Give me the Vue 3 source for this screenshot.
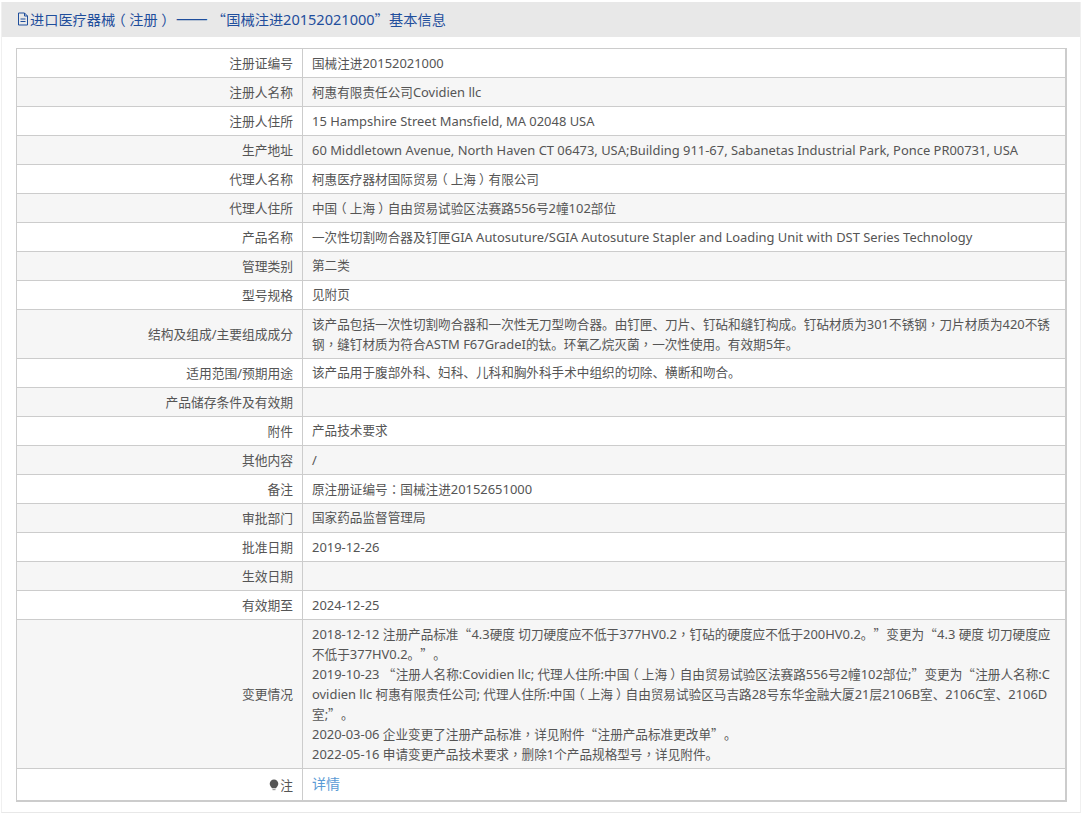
<template>
  <div class="page">
    <div class="panel">
      <div class="panel-head">
        <svg class="doc-icon" viewBox="0 0 12 14" width="12" height="14">
          <path d="M1.5 1h6l3 3v9h-9z M7.5 1v3h3 M3.5 7h5 M3.500 9.500h5" fill="none" stroke="currentColor" stroke-width="1" />
        </svg>
        <span class="head-text"><span v-for="(seg, n) in split(title)" :key="n" :class="seg.cls">{{ seg.text }}</span></span>
      </div>
      <div class="panel-body">
        <table class="info-table">
          <colgroup>
            <col class="col-label" />
            <col />
          </colgroup>
          <tbody>
            <tr v-for="(row, i) in rows" :key="i" :class="{ odd: i % 2 === 1 }">
              <td class="label">{{ row.label }}</td>
              <td class="value">
                <div v-for="(line, j) in row.lines" :key="j" class="line">
                  <span v-for="(seg, n) in split(line)" :key="n" :class="seg.cls">{{ seg.text }}</span>
                </div>
              </td>
            </tr>
            <tr class="last">
              <td class="label">
                <svg class="bulb" viewBox="0 0 10 12" width="10" height="12">
                  <path d="M5 .5a4.300 4.300 0 0 1 4.300 4.300c0 1.900-1.500 3-2.300 4.400H3C2.200 7.800.7 6.700.7 4.800A4.300 4.300 0 0 1 5 .5z" fill="#555" />
                  <rect x="3.500" y="10" width="3" height="1.200" fill="#999" />
                </svg>注
              </td>
              <td class="value"><a class="link" href="#">详情</a></td>
            </tr>
          </tbody>
        </table>
      </div>
    </div>
  </div>
</template>

<script setup>
const title = '进口医疗器械（注册） ——“国械注进20152021000”基本信息'

// 西文、引号、破折号、括号、居中标点分开设置字体
function split(text) {
  return text.split(/([\x20-\x7e]+|[“”]+|—+|[，：]+|[（）])/).filter(Boolean).map((part) => {
    let cls = ''
    if (/^[\x20-\x7e]+$/.test(part)) cls = 'latin'
    else if (/^[“”]+$/.test(part)) cls = 'wide'
    else if (/^—+$/.test(part)) cls = 'dash'
    else if (/^[，：]+$/.test(part)) cls = 'mid'
    else if (/^[（）]$/.test(part)) cls = 'paren'
    return { text: part, cls }
  })
}

// 表格内容
const rows = [
  { label: '注册证编号', lines: ['国械注进20152021000'] },
  { label: '注册人名称', lines: ['柯惠有限责任公司Covidien llc'] },
  { label: '注册人住所', lines: ['15 Hampshire Street Mansfield, MA 02048 USA'] },
  { label: '生产地址', lines: ['60 Middletown Avenue, North Haven CT 06473, USA;Building 911-67, Sabanetas Industrial Park, Ponce PR00731, USA'] },
  { label: '代理人名称', lines: ['柯惠医疗器材国际贸易（上海）有限公司'] },
  { label: '代理人住所', lines: ['中国（上海）自由贸易试验区法赛路556号2幢102部位'] },
  { label: '产品名称', lines: ['一次性切割吻合器及钉匣GIA Autosuture/SGIA Autosuture Stapler and Loading Unit with DST Series Technology'] },
  { label: '管理类别', lines: ['第二类'] },
  { label: '型号规格', lines: ['见附页'] },
  {
    label: '结构及组成/主要组成成分',
    lines: [
      '该产品包括一次性切割吻合器和一次性无刀型吻合器。由钉匣、刀片、钉砧和缝钉构成。钉砧材质为301不锈钢，刀片材质为420不锈',
      '钢，缝钉材质为符合ASTM F67GradeI的钛。环氧乙烷灭菌，一次性使用。有效期5年。'
    ]
  },
  { label: '适用范围/预期用途', lines: ['该产品用于腹部外科、妇科、儿科和胸外科手术中组织的切除、横断和吻合。'] },
  { label: '产品储存条件及有效期', lines: [''] },
  { label: '附件', lines: ['产品技术要求'] },
  { label: '其他内容', lines: ['/'] },
  { label: '备注', lines: ['原注册证编号：国械注进20152651000'] },
  { label: '审批部门', lines: ['国家药品监督管理局'] },
  { label: '批准日期', lines: ['2019-12-26'] },
  { label: '生效日期', lines: [''] },
  { label: '有效期至', lines: ['2024-12-25'] },
  {
    label: '变更情况',
    lines: [
      '2018-12-12 注册产品标准“4.3硬度 切刀硬度应不低于377HV0.2，钉砧的硬度应不低于200HV0.2。”变更为“4.3 硬度 切刀硬度应',
      '不低于377HV0.2。”。',
      '2019-10-23 “注册人名称:Covidien llc; 代理人住所:中国（上海）自由贸易试验区法赛路556号2幢102部位;”变更为“注册人名称:C',
      'ovidien llc 柯惠有限责任公司; 代理人住所:中国（上海）自由贸易试验区马吉路28号东华金融大厦21层2106B室、2106C室、2106D',
      '室;”。',
      '2020-03-06 企业变更了注册产品标准，详见附件“注册产品标准更改单”。',
      '2022-05-16 申请变更产品技术要求，删除1个产品规格型号，详见附件。'
    ]
  }
]
</script>

<style scoped>
.page {
  font-family: "Noto Sans", "Noto Sans CJK SC", sans-serif;
  font-size: 12.62px;
  color: #555;
  text-spacing-trim: space-all;
}

.latin {
  font-size: 1.025em;
}

.wide {
  font-family: "Noto Sans CJK SC", sans-serif;
  margin-right: 0.3px;
}

.dash {
  font-family: "Noto Sans CJK SC", sans-serif;
  font-size: 1.35em;
  line-height: 1px;
  margin-right: 4px;
}

.mid {
  font-family: "Noto Sans CJK TC", sans-serif;
}

/* 括号取半宽字形，左右各留四分之一字宽，看起来居中 */
.paren {
  font-family: "Noto Sans CJK SC", sans-serif;
  font-feature-settings: "halt";
  margin: 0 0.25em;
}

.panel {
  margin: 2px 0 0 1px;
  width: 1080px;
  height: 811px;
  border-bottom: 1px solid #e8e8e8;
  border-left: 1px solid #f0f0f0;
  border-right: 1px solid #f0f0f0;
  box-sizing: border-box;
}

.panel-head {
  display: flex;
  align-items: center;
  box-sizing: border-box;
  height: 35px;
  padding-left: 15px;
  padding-bottom: 2px;
  background: #e8e8e8;
  color: #1f4e9c;
  font-size: 14.2px;
}

.head-text {
  line-height: 20px;
  height: 20px;
}

.doc-icon {
  flex: none;
  margin-right: 1px;
}

.panel-body {
  padding: 11px 14px 0 14px;
}

.info-table {
  width: 1051px;
  border-collapse: collapse;
  table-layout: fixed;
  border-bottom: 2px solid #ccc;
  border-right: 2px solid #ccc;
}

.col-label {
  width: 286px;
}

.info-table td {
  border: 1px solid #ccc;
  padding: 4px 9px;
  line-height: 20px;
}

.info-table .label {
  text-align: right;
  font-size: 12.75px;
}

.info-table .value {
  white-space: nowrap;
}

.line {
  height: 20px;
}

.odd td {
  background: #f6f6f6;
}

.last td {
  padding-top: 5px;
  padding-bottom: 5px;
}

.bulb {
  vertical-align: -1px;
  margin-right: 1px;
}

.link {
  color: #5b9bd5;
  text-decoration: none;
  font-size: 14px;
}
</style>
